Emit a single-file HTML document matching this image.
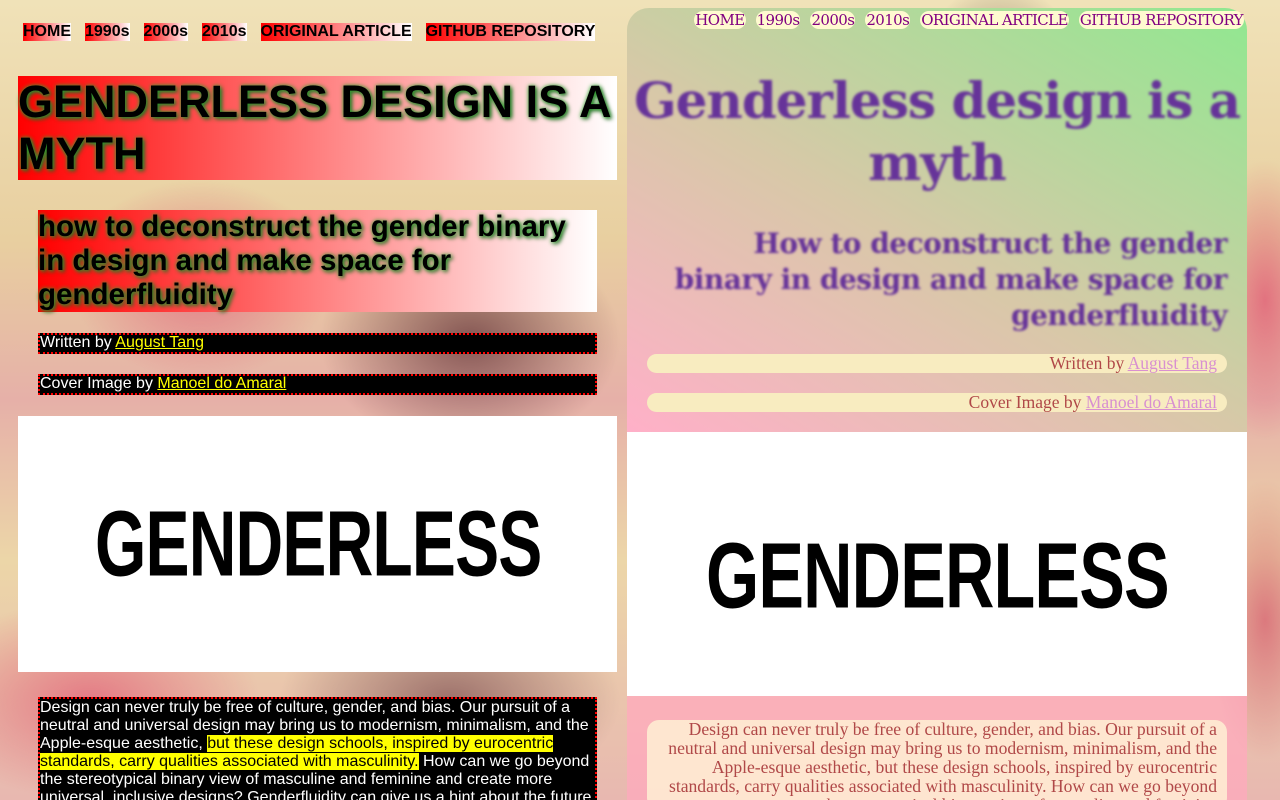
<!DOCTYPE html>
<html><head><meta charset="utf-8"><style>
*{margin:0;padding:0;box-sizing:border-box}
html,body{width:1280px;height:800px;overflow:hidden}
body{position:relative;font-family:"Liberation Sans",Arial,sans-serif;
background:
radial-gradient(ellipse 130px 100px at 200px 280px,rgba(225,90,120,.7),rgba(225,90,120,0)),
radial-gradient(ellipse 150px 110px at 470px 340px,rgba(90,42,48,.7),rgba(90,42,48,0)),
radial-gradient(ellipse 90px 140px at 1000px 120px,rgba(42,26,32,.6),rgba(42,26,32,0)),
radial-gradient(ellipse 170px 100px at 90px 700px,rgba(224,74,106,.6),rgba(224,74,106,0)),
radial-gradient(ellipse 170px 100px at 450px 700px,rgba(106,58,64,.6),rgba(106,58,64,0)),
radial-gradient(ellipse 60px 140px at 1265px 300px,rgba(224,80,112,.7),rgba(224,80,112,0)),
radial-gradient(ellipse 60px 140px at 1265px 620px,rgba(208,64,96,.6),rgba(208,64,96,0)),
linear-gradient(180deg,#f0e2b8 0%,#e8cfa0 30%,#e6b0a8 50%,#ecd6a8 70%,#e8b8b0 100%);}
.nl{position:absolute;top:23px;left:23px;display:flex;gap:14px;font-weight:bold;font-size:16px}
.nl span{background:linear-gradient(90deg,#f00,#fff);color:#000;line-height:18px}
.h1{position:absolute;left:18px;top:76px;width:599px;height:104px;background:linear-gradient(90deg,#f00,#fff);font-size:45px;font-weight:bold;line-height:52px;color:#000;text-shadow:0 0 4px #3a3,2px 2px 4px #262}
.h2{position:absolute;left:38px;top:210px;width:559px;height:102px;background:linear-gradient(90deg,#f00,#fff);font-size:29.5px;font-weight:bold;line-height:34px;color:#000;text-shadow:0 0 4px #3a3,2px 2px 4px #262;padding-right:20px}
.by{position:absolute;left:38px;width:559px;height:21px;background:#000;border:2px dotted #f00;color:#fff;font-size:16px;line-height:16px}
.by a{color:#ff0;text-decoration:underline}
.img{position:absolute;background:#fff;overflow:hidden}
.logo{position:absolute;font-family:"Liberation Sans",sans-serif;font-weight:900;font-size:80px;line-height:80px;transform-origin:0 0;color:#000;white-space:nowrap;letter-spacing:-1px}
.pl{position:absolute;left:38px;top:697px;width:559px;height:120px;background:#000;border:2px dotted #f00;color:#fff;font-size:16px;line-height:18px}
.pl mark{background:#ff0;color:#000}
.rp{position:absolute;left:627px;top:8px;width:620px;height:424px;border-radius:22px 22px 0 0;background:linear-gradient(30deg,#ffb0c8 0%,#d8c8a8 45%,#90e890 100%)}
.nr{position:absolute;top:11px;right:36px;display:flex;gap:10px;font-family:"DejaVu Serif","Liberation Serif",serif;font-size:15px}
.nr span{background:#fffad0;color:#800080;border-radius:9px;line-height:18px;padding:0 1px;letter-spacing:-0.6px}
.rt{position:absolute;left:627px;width:620px;text-align:center;font-family:"DejaVu Serif","Liberation Serif",serif;font-weight:bold;color:#663399;filter:blur(1.3px)}
.rb{position:absolute;left:647px;width:580px;height:19px;background:#f8ecc0;border-radius:10px;text-align:right;padding-right:10px;font-family:"Liberation Serif",serif;font-size:17.5px;line-height:19px;color:#b04848}
.rb a{color:#d890d0;text-decoration:underline}
.rlow{position:absolute;left:627px;top:696px;width:620px;height:104px;background:rgba(255,170,190,.75)}
.rp2{position:absolute;left:647px;top:720px;width:580px;height:90px;background:rgba(255,248,215,.75);border-radius:12px;text-align:right;padding-right:10px;font-family:"Liberation Serif",serif;font-size:17.6px;line-height:19px;color:#b04848}
</style></head><body>
<div class="nl"><span>HOME</span><span>1990s</span><span>2000s</span><span>2010s</span><span>ORIGINAL ARTICLE</span><span>GITHUB REPOSITORY</span></div>
<div class="h1">GENDERLESS DESIGN IS A MYTH</div>
<div class="h2">how to deconstruct the gender binary in design and make space for genderfluidity</div>
<div class="by" style="top:333px">Written by <a>August Tang</a></div>
<div class="by" style="top:374px">Cover Image by <a>Manoel do Amaral</a></div>
<div class="img" style="left:18px;top:416px;width:599px;height:256px"><div class="logo" style="left:77px;top:82px;transform:scale(0.825,1.16)">GENDERLESS</div></div>
<div class="pl">Design can never truly be free of culture, gender, and bias. Our pursuit of a neutral and universal design may bring us to modernism, minimalism, and the Apple-esque aesthetic, <mark>but these design schools, inspired by eurocentric standards, carry qualities associated with masculinity.</mark> How can we go beyond the stereotypical binary view of masculine and feminine and create more universal, inclusive designs? Genderfluidity can give us a hint about the future</div>

<div class="rp"></div>
<div class="nr"><span>HOME</span><span>1990s</span><span>2000s</span><span>2010s</span><span>ORIGINAL ARTICLE</span><span>GITHUB REPOSITORY</span></div>
<div class="rt" style="top:70px;font-size:50px;line-height:62px;letter-spacing:-1px">Genderless design is a<br>myth</div>
<div class="rt" style="top:226px;font-size:28px;line-height:36px;text-align:right;width:600px;letter-spacing:-0.5px">How to deconstruct the gender<br>binary in design and make space for<br>genderfluidity</div>
<div class="rb" style="top:354px">Written by <a>August Tang</a></div>
<div class="rb" style="top:393px">Cover Image by <a>Manoel do Amaral</a></div>
<div class="img" style="left:627px;top:432px;width:620px;height:264px"><div class="logo" style="left:79px;top:98px;transform:scale(0.855,1.16)">GENDERLESS</div></div>
<div class="rlow"></div>
<div class="rp2">Design can never truly be free of culture, gender, and bias. Our pursuit of a neutral and universal design may bring us to modernism, minimalism, and the Apple-esque aesthetic, but these design schools, inspired by eurocentric standards, carry qualities associated with masculinity. How can we go beyond the stereotypical binary view of masculine and feminine</div>
</body></html>
